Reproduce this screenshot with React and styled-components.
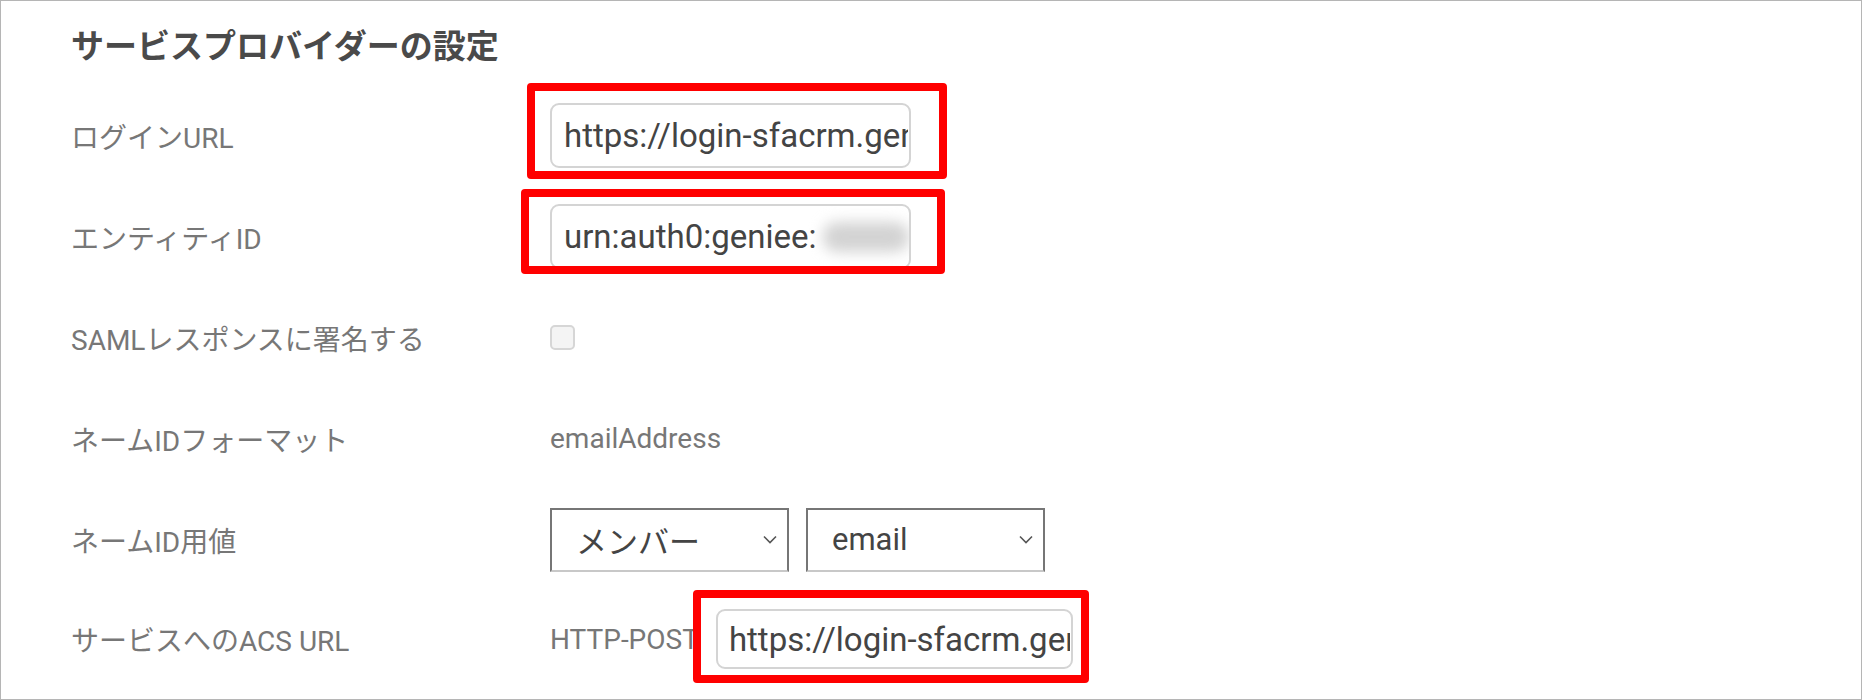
import { styled, createGlobalStyle } from "styled-components";

const GlobalStyle = createGlobalStyle`
  html, body {
    margin: 0;
    padding: 0;
    background: #fff;
  }
  body {
    font-family: Roboto, "Noto Sans CJK JP", sans-serif;
  }
`;

const Frame = styled.div`
  box-sizing: border-box;
  width: 1862px;
  height: 700px;
  border: 1px solid #b5b5b5;
  padding: 26px 0 0 70px;
  overflow: hidden;
`;

const Title = styled.h2`
  margin: 0;
  font-size: 33px;
  line-height: 40px;
  font-weight: 700;
  color: #4a4a4a;
`;

const Form = styled.div`
  margin-top: 18px;
  display: flex;
  flex-direction: column;
`;

const Row = styled.div`
  display: grid;
  grid-template-columns: 479px 1fr;
  align-items: center;
  height: ${(p) => p.$h || 101}px;
`;

const Label = styled.div`
  font-size: 28px;
  color: #777;
`;

const Value = styled.div`
  display: flex;
  align-items: center;
  gap: ${(p) => p.$gap || 0}px;
`;

const PlainText = styled.span`
  font-size: 28px;
  color: #777;
`;

const Highlight = styled.div`
  position: relative;
  display: inline-flex;

  &::after {
    content: "";
    position: absolute;
    top: -${(p) => p.$t}px;
    right: -${(p) => p.$r}px;
    bottom: -${(p) => p.$b}px;
    left: -${(p) => p.$l}px;
    border: 8px solid #ff0000;
    border-radius: 4px;
    pointer-events: none;
  }
`;

const TextInput = styled.input`
  box-sizing: border-box;
  width: ${(p) => p.$w || 361}px;
  height: ${(p) => p.$h || 65}px;
  border: 2px solid #d4d4d4;
  border-radius: 9px;
  padding: 0 1px 0 ${(p) => p.$pl || 12}px;
  margin: 0;
  font-family: Roboto, "Noto Sans CJK JP", sans-serif;
  font-size: 33px;
  color: #444;
  background: #fff;
  outline: none;
`;

const Field = styled.div`
  box-sizing: border-box;
  width: 361px;
  height: 65px;
  border: 2px solid #d4d4d4;
  border-radius: 9px;
  padding: 0 12px;
  display: flex;
  align-items: center;
  overflow: hidden;
  white-space: nowrap;
  font-size: 33px;
  color: #444;
  background: #fff;
`;

const Blurred = styled.span`
  display: inline-block;
  width: 86px;
  height: 30px;
  margin-left: 6px;
  border-radius: 14px;
  background: #d3d3d3;
  filter: blur(7px);
  flex-shrink: 0;
`;

const Checkbox = styled.span`
  box-sizing: border-box;
  width: 25px;
  height: 25px;
  border: 2px solid #d6d6d6;
  border-radius: 5px;
  background: #f4f4f4;
`;

const SelectBox = styled.div`
  box-sizing: border-box;
  width: 239px;
  height: 64px;
  border: 2px solid #767676;
  border-bottom-color: #c8c8c8;
  padding: 0 10px 0 24px;
  display: flex;
  align-items: center;
  justify-content: space-between;
  font-size: 31px;
  color: #444;
`;

const Chevron = () => (
  <svg width="14" height="9" viewBox="0 0 14 9" aria-hidden="true">
    <path d="M1 1.5 L7 7.5 L13 1.5" fill="none" stroke="#555" strokeWidth="1.6" />
  </svg>
);

const Select = ({ children }) => (
  <SelectBox>
    <span>{children}</span>
    <Chevron />
  </SelectBox>
);

const loginUrl = "https://login-sfacrm.geniee.jp/login/callback";

const App = () => {
  return (
    <>
      <GlobalStyle />
      <Frame>
        <Title>サービスプロバイダーの設定</Title>
        <Form>
          <Row>
            <Label>ログインURL</Label>
            <Value>
              <Highlight $t={20} $r={36} $b={11} $l={23}>
                <TextInput readOnly value={loginUrl} />
              </Highlight>
            </Value>
          </Row>
          <Row>
            <Label>エンティティID</Label>
            <Value>
              <Highlight $t={15} $r={34} $b={5} $l={29}>
                <Field>
                  urn:auth0:geniee:
                  <Blurred />
                </Field>
              </Highlight>
            </Value>
          </Row>
          <Row>
            <Label>SAMLレスポンスに署名する</Label>
            <Value>
              <Checkbox />
            </Value>
          </Row>
          <Row>
            <Label>ネームIDフォーマット</Label>
            <Value>
              <PlainText>emailAddress</PlainText>
            </Value>
          </Row>
          <Row>
            <Label>ネームID用値</Label>
            <Value $gap={17}>
              <Select>メンバー</Select>
              <Select>email</Select>
            </Value>
          </Row>
          <Row $h={98}>
            <Label>サービスへのACS URL</Label>
            <Value $gap={17}>
              <PlainText>HTTP-POST</PlainText>
              <Highlight $t={19} $r={16} $b={14} $l={23}>
                <TextInput readOnly value={loginUrl} $w={357} $h={60} $pl={11} />
              </Highlight>
            </Value>
          </Row>
        </Form>
      </Frame>
    </>
  );
};

export default App;
